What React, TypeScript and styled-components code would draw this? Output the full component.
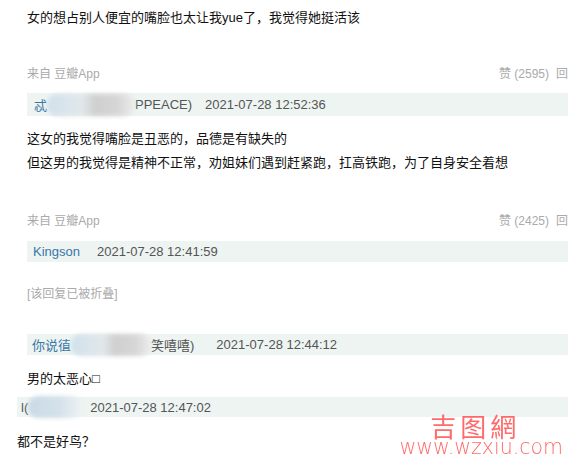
import styled, { createGlobalStyle } from "styled-components";

const GlobalStyle = createGlobalStyle`
  html, body {
    margin: 0;
    padding: 0;
    background: #fff;
  }
  body {
    font-family: "Liberation Sans", "Noto Sans CJK SC", sans-serif;
  }
`;

const Page = styled.div`
  position: relative;
  width: 568px;
  height: 457px;
  overflow: hidden;
  padding-top: 6px;
  box-sizing: border-box;
  background: #fff;
`;

const Text = styled.div<{ $top: number; $left?: number }>`
  margin-top: ${(p) => p.$top}px;
  padding-left: ${(p) => p.$left ?? 27}px;
  font-size: 13px;
  line-height: 24px;
  color: #111;
  white-space: nowrap;
`;

const MetaRow = styled.div<{ $top: number }>`
  display: flex;
  justify-content: space-between;
  margin-top: ${(p) => p.$top}px;
  padding-left: 27px;
  font-size: 12px;
  line-height: 20px;
  color: #aaa;
  white-space: nowrap;
`;

// the "回应" link runs past the right edge in the screenshot
const Votes = styled.span`
  display: flex;
  gap: 7px;
  margin-right: -12px;
  color: #aaa;
`;

const Folded = styled.div<{ $top: number }>`
  margin-top: ${(p) => p.$top}px;
  padding-left: 27px;
  font-size: 12px;
  line-height: 20px;
  color: #aaa;
`;

const Bar = styled.div<{ $top: number; $left?: number; $height?: number }>`
  display: flex;
  align-items: center;
  margin-top: ${(p) => p.$top}px;
  margin-left: ${(p) => p.$left ?? 27}px;
  height: ${(p) => p.$height ?? 23}px;
  padding-left: 4px;
  background: #edf4f1;
  font-size: 13px;
  white-space: nowrap;
`;

const Author = styled.span<{ $indent?: number }>`
  display: flex;
  align-items: center;
  margin-left: ${(p) => p.$indent ?? 0}px;
  color: #3a77a8;
`;

const Dim = styled.span`
  color: #555;
`;

// the mosaic over the hidden user names
const Blur = styled.span<{ $w: number; $tone: "blue" | "mixed" }>`
  display: inline-block;
  width: ${(p) => p.$w}px;
  height: 22px;
  margin: -4px 0;
  border-radius: 10px;
  filter: blur(2px);
  background: ${(p) =>
    p.$tone === "blue"
      ? "linear-gradient(90deg, #c9dae6, #d5e2ea 60%, #eef2f2)"
      : "linear-gradient(90deg, #d0e0ea 0%, #dbe6ec 25%, #e2e7ea 40%, #cfcfcf 55%, #d6d6d6 80%, #ececec 100%)"};
`;

const DateText = styled.span<{ $gap: number }>`
  margin-left: ${(p) => p.$gap}px;
  color: #555;
`;

const Watermark = styled.div`
  position: absolute;
  right: 5px;
  bottom: 1px;
  display: flex;
  flex-direction: column;
  align-items: center;
  color: #ff5a5a;
  opacity: 0.9;
`;

const Logo = styled.div`
  margin-right: 12px;
  font-family: "Noto Sans CJK SC", sans-serif;
  font-weight: 400;
  font-size: 26px;
  line-height: 24px;
  letter-spacing: 4px;
`;

const Site = styled.div`
  font-family: "DejaVu Sans", sans-serif;
  font-weight: 200;
  font-size: 20.5px;
  line-height: 18px;
`;

export default function App() {
  return (
    <Page>
      <GlobalStyle />
      <Text $top={0}>女的想占别人便宜的嘴脸也太让我yue了，我觉得她挺活该</Text>

      <MetaRow $top={34}>
        <span>来自 豆瓣App</span>
        <Votes>
          <span>赞 (2595)</span>
          <span>回应</span>
        </Votes>
      </MetaRow>
      <Bar $top={9}>
        <Author $indent={3}>
          忒<Blur $w={88} $tone="mixed" />
          <Dim>PPEACE)</Dim>
        </Author>
        <DateText $gap={13}>2021-07-28 12:52:36</DateText>
      </Bar>

      <Text $top={11}>
        这女的我觉得嘴脸是丑恶的，品德是有缺失的
        <br />
        但这男的我觉得是精神不正常，劝姐妹们遇到赶紧跑，扛高铁跑，为了自身安全着想
      </Text>

      <MetaRow $top={36}>
        <span>来自 豆瓣App</span>
        <Votes>
          <span>赞 (2425)</span>
          <span>回应</span>
        </Votes>
      </MetaRow>
      <Bar $top={10} $height={21}>
        <Author $indent={2}>Kingson</Author>
        <DateText $gap={17}>2021-07-28 12:41:59</DateText>
      </Bar>

      <Folded $top={22}>[该回复已被折叠]</Folded>

      <Bar $top={30} $height={21}>
        <Author $indent={1}>
          你说徝
          <Blur $w={80} $tone="mixed" />
          <Dim>笑嘻嘻)</Dim>
        </Author>
        <DateText $gap={22}>2021-07-28 12:44:12</DateText>
      </Bar>

      <Text $top={12}>男的太恶心□</Text>

      <Bar $top={6} $left={17} $height={20}>
        <Author>
          <Dim>l(</Dim>
          <Blur $w={54} $tone="blue" />
        </Author>
        <DateText $gap={8}>2021-07-28 12:47:02</DateText>
      </Bar>

      <Text $top={13} $left={17}>都不是好鸟？</Text>

      <Watermark>
        <Logo>吉图網</Logo>
        <Site>www.wzxiu.com</Site>
      </Watermark>
    </Page>
  );
}
